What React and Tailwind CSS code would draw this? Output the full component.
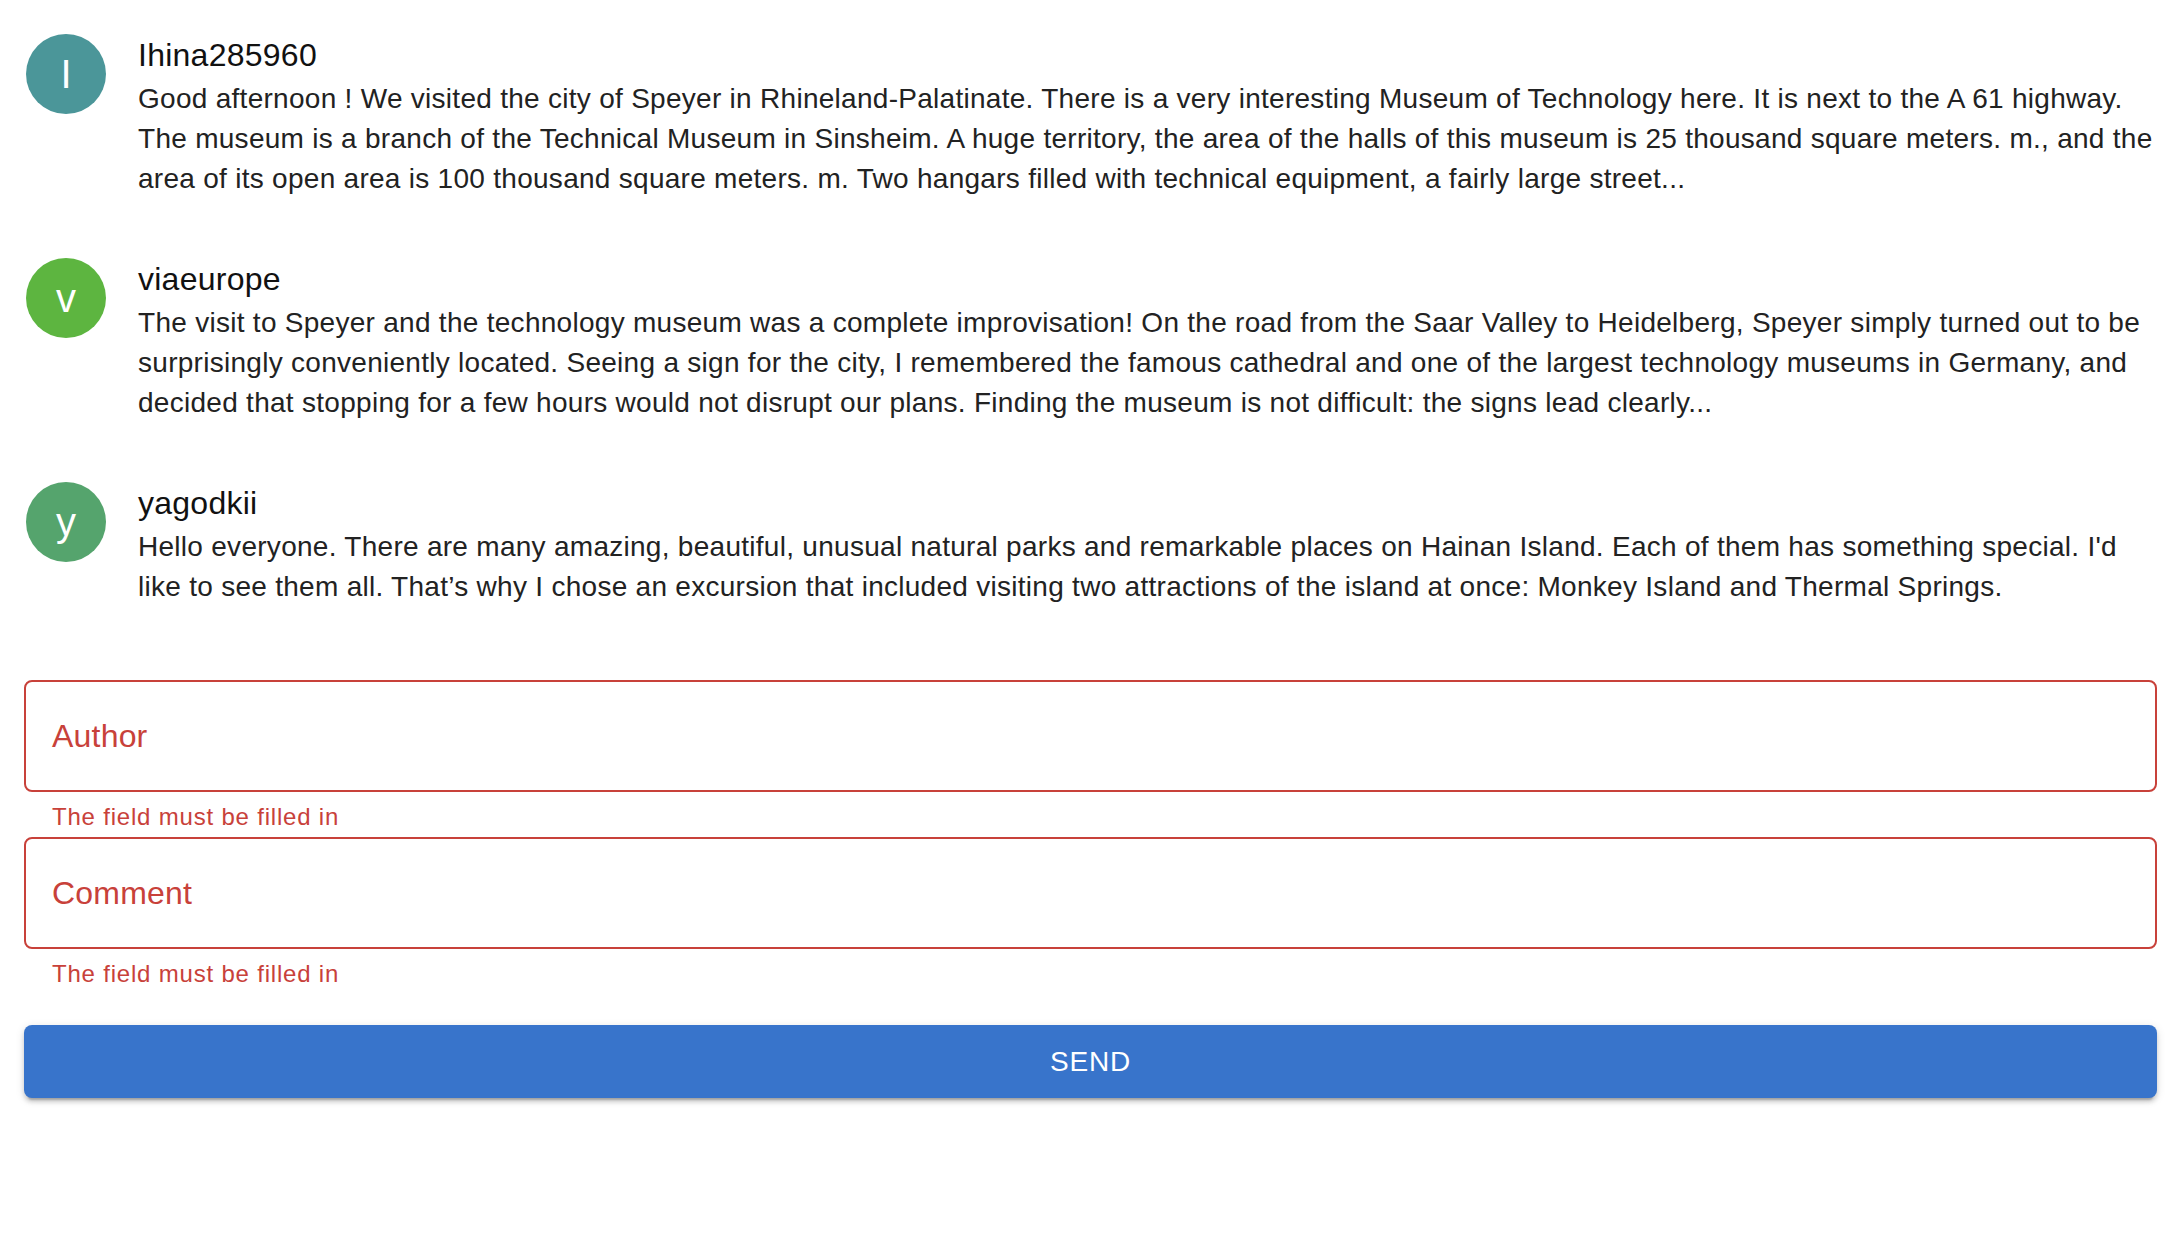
import React from "react";

const items = [
  {
    letter: "I",
    color: "bg-[#4b9699]",
    name: "Ihina285960",
    text: "Good afternoon ! We visited the city of Speyer in Rhineland-Palatinate. There is a very interesting Museum of Technology here. It is next to the A 61 highway. The museum is a branch of the Technical Museum in Sinsheim. A huge territory, the area of the halls of this museum is 25 thousand square meters. m., and the area of its open area is 100 thousand square meters. m. Two hangars filled with technical equipment, a fairly large street...",
  },
  {
    letter: "v",
    color: "bg-[#5db540]",
    name: "viaeurope",
    text: "The visit to Speyer and the technology museum was a complete improvisation! On the road from the Saar Valley to Heidelberg, Speyer simply turned out to be surprisingly conveniently located. Seeing a sign for the city, I remembered the famous cathedral and one of the largest technology museums in Germany, and decided that stopping for a few hours would not disrupt our plans. Finding the museum is not difficult: the signs lead clearly...",
  },
  {
    letter: "y",
    color: "bg-[#55a46d]",
    name: "yagodkii",
    text: "Hello everyone. There are many amazing, beautiful, unusual natural parks and remarkable places on Hainan Island. Each of them has something special. I'd like to see them all. That\u2019s why I chose an excursion that included visiting two attractions of the island at once: Monkey Island and Thermal Springs.",
  },
];

function Field({ label }) {
  return (
    <div>
      <div className="h-[112px] border-2 border-[#c8413a] rounded-[8px] flex items-center pl-[26px]">
        <span className="text-[32px] tracking-[0.2px] text-[#c8413a]">{label}</span>
      </div>
      <div className="mt-[5px] pl-[28px] text-[24px] leading-[40px] tracking-[0.8px] text-[#c8413a]">
        The field must be filled in
      </div>
    </div>
  );
}

export default function App() {
  return (
    <div className="w-full min-h-[1260px] bg-white font-['Liberation_Sans',Arial,sans-serif]">
      <div className="pt-[31px] flex flex-col gap-[56px]">
        {items.map((it) => (
          <div key={it.name} className="flex pl-[26px] pr-[24px]">
            <div
              className={`mt-[3px] w-[80px] h-[80px] shrink-0 rounded-full ${it.color} flex items-center justify-center text-white text-[40px]`}
            >
              {it.letter}
            </div>
            <div className="ml-[32px] flex-1">
              <div className="text-[32px] leading-[48px] tracking-[0.25px] text-[#111]">{it.name}</div>
              <div className="text-[28px] leading-[40px] tracking-[0.28px] text-[#222]">{it.text}</div>
            </div>
          </div>
        ))}
      </div>
      <div className="mt-[73px] pl-[24px] pr-[27px]">
        <Field label="Author" />
        <Field label="Comment" />
        <button className="mt-[31px] w-full h-[73px] rounded-[8px] bg-[#3874cb] text-white text-[28px] tracking-[0.8px] shadow-[0_6px_2px_-4px_rgba(0,0,0,0.2),0_4px_4px_0_rgba(0,0,0,0.14),0_2px_10px_0_rgba(0,0,0,0.12)]">
          SEND
        </button>
      </div>
    </div>
  );
}
